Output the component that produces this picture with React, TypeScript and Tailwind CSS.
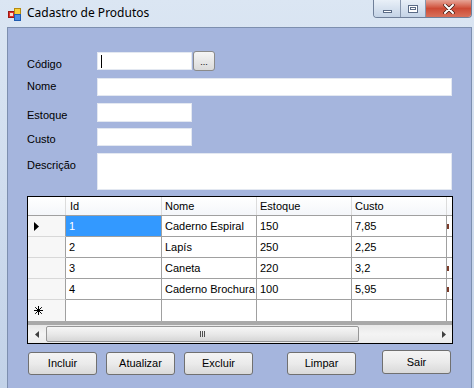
import React from 'react';

const rows = [
  { id: '1', nome: 'Caderno Espiral', estoque: '150', custo: '7,85' },
  { id: '2', nome: 'Lapís', estoque: '250', custo: '2,25' },
  { id: '3', nome: 'Caneta', estoque: '220', custo: '3,2' },
  { id: '4', nome: 'Caderno Brochura', estoque: '100', custo: '5,95' },
];

const cols = 'grid grid-cols-[38px_96px_95px_95px_95px_1fr]';

function AppIcon() {
  return (
    <svg width="13" height="13" viewBox="0 0 13 13">
      <rect x="0.5" y="3.5" width="6" height="6" fill="#e0302a" stroke="#9a1a14" />
      <rect x="2" y="5" width="3" height="3" fill="#fbe0d0" />
      <rect x="6.5" y="0.5" width="6" height="6" fill="#f7cf3a" stroke="#b58a10" />
      <rect x="6.5" y="6.5" width="6" height="6" fill="#4d8ee6" stroke="#1f5bb0" />
    </svg>
  );
}

function WinButtons() {
  return (
    <div className="flex h-[18px] mr-[2px] rounded-b-[4px] border border-t-0 border-[#6f7f99] overflow-hidden">
      <div className="w-[27px] flex items-center justify-center bg-gradient-to-b from-[#e9f0f8] to-[#c4d3e6] border-r border-[#8796ad]">
        <div className="w-[9px] h-[3px] mt-[5px] bg-white border border-[#5a6b86]" />
      </div>
      <div className="w-[25px] flex items-center justify-center bg-gradient-to-b from-[#e9f0f8] to-[#c4d3e6] border-r border-[#8796ad]">
        <div className="w-[10px] h-[8px] bg-white border border-[#5a6b86] flex items-center justify-center">
          <div className="w-[6px] h-[3px] border border-[#5a6b86]" />
        </div>
      </div>
      <div className="w-[45px] flex items-center justify-center bg-gradient-to-b from-[#e6a497] via-[#cd4a35] to-[#d8705a]">
        <svg width="12" height="10" viewBox="0 0 12 10">
          <path d="M2 1 L10 9 M10 1 L2 9" stroke="#3b1a14" strokeWidth="3.4" strokeLinecap="round" />
          <path d="M2 1 L10 9 M10 1 L2 9" stroke="#ffffff" strokeWidth="2" strokeLinecap="round" />
        </svg>
      </div>
    </div>
  );
}

function Field({ w, h = 'h-[18px]', children }: { w: string; h?: string; children?: React.ReactNode }) {
  return <div className={`${w} ${h} bg-white border border-[#e3e8f1] flex items-center`}>{children}</div>;
}

function Btn({ label, className }: { label: string; className: string }) {
  return (
    <div
      className={`w-[69px] h-[23px] flex items-center justify-center rounded-[3px] border border-[#707070] bg-gradient-to-b from-[#f4f4f4] via-[#ebebeb] to-[#d9d9d9] text-[11px] text-black ${className}`}
    >
      {label}
    </div>
  );
}

function Cell({ children, className = '' }: { children?: React.ReactNode; className?: string }) {
  return (
    <div className={`h-[21px] border-r border-b border-[#a0a0a0] flex items-center pl-[3px] bg-white ${className}`}>
      {children}
    </div>
  );
}

export default function App() {
  return (
    <div
      className="w-[474px] h-[388px] overflow-hidden flex flex-col bg-gradient-to-b from-[#dbe6f3] via-[#cfdcee] to-[#c2d2e8] text-black"
      style={{ fontFamily: '"Liberation Sans", Arial, sans-serif' }}
    >
      {/* Title bar */}
      <div className="h-[27px] flex items-start shrink-0">
        <div className="pl-[8px] pt-[8px]">
          <AppIcon />
        </div>
        <div className="ml-[6px] mt-[4px] text-[12px] text-black" style={{ fontFamily: '"Noto Sans", sans-serif' }}>
          Cadastro de Produtos
        </div>
        <div className="flex-1" />
        <WinButtons />
      </div>

      {/* Client area */}
      <div className="flex-1 ml-[7px] mr-[2px] border-l border-t border-r border-[#7d8faf] bg-[#a5b5dd] pl-[19px] pt-[24px] text-[11px] leading-[13px]">
        <div className="flex items-start">
          <div className="w-[70px] pt-[6px]">Código</div>
          <Field w="w-[95px]">
            <div className="ml-[3px] w-px h-[13px] bg-black" />
          </Field>
          <div className="ml-[1px] -mt-[1px] -mb-[1px] w-[22px] h-[20px] rounded-[3px] border border-[#8a8a8a] bg-gradient-to-b from-[#f5f5f5] to-[#dadada] flex items-center justify-center text-[9px] leading-none pt-[3px]">
            ...
          </div>
        </div>
        <div className="flex items-start mt-[7px]">
          <div className="w-[70px] pt-[2px]">Nome</div>
          <Field w="w-[355px]" />
        </div>
        <div className="flex items-start mt-[7px]">
          <div className="w-[70px] pt-[6px]">Estoque</div>
          <Field w="w-[95px]" h="h-[19px]" />
        </div>
        <div className="flex items-start mt-[6px]">
          <div className="w-[70px] pt-[5px]">Custo</div>
          <Field w="w-[95px]" />
        </div>
        <div className="flex items-start mt-[7px]">
          <div className="w-[70px] pt-[6px]">Descrição</div>
          <Field w="w-[355px]" h="h-[37px]" />
        </div>

        {/* Data grid */}
        <div className="mt-[6px] w-[426px] border border-black bg-[#ababab] flex flex-col">
          <div className={`${cols} h-[19px] bg-gradient-to-b from-white to-[#f4f6fa] border-b border-[#a0a0a0]`}>
            <div className="border-r border-[#dcdcdc]" />
            <div className="border-r border-[#dcdcdc] pl-[4px] flex items-center">Id</div>
            <div className="border-r border-[#dcdcdc] pl-[3px] flex items-center">Nome</div>
            <div className="border-r border-[#dcdcdc] pl-[3px] flex items-center">Estoque</div>
            <div className="border-r border-[#dcdcdc] pl-[3px] flex items-center">Custo</div>
            <div />
          </div>
          {rows.map((r, i) => (
            <div key={r.id} className={cols}>
              <div className="h-[21px] border-r border-[#a0a0a0] border-b border-b-[#d8d8d8] bg-[#f7f7f7] flex items-center pl-[6px]">
                {i === 0 && (
                  <svg width="5" height="9" viewBox="0 0 5 9">
                    <path d="M0 0 L5 4.5 L0 9 Z" fill="#000" />
                  </svg>
                )}
              </div>
              <Cell className={i === 0 ? '!bg-[#3399ff] text-white' : ''}>{r.id}</Cell>
              <Cell>{r.nome}</Cell>
              <Cell>{r.estoque}</Cell>
              <Cell>{r.custo}</Cell>
              <div className="h-[21px] border-b border-[#a0a0a0] bg-white flex items-center">
                {i !== 1 && <div className="w-[2px] h-[5px] bg-[#7a3b2a]" />}
              </div>
            </div>
          ))}
          <div className={cols}>
            <div className="h-[21px] border-r border-[#a0a0a0] bg-[#f7f7f7] flex items-center pl-[6px]">
              <svg width="9" height="9" viewBox="0 0 9 9">
                <path d="M4.5 0 V9 M0 4.5 H9 M1.2 1.2 L7.8 7.8 M7.8 1.2 L1.2 7.8" stroke="#000" strokeWidth="1" />
              </svg>
            </div>
            <Cell className="border-b-0" />
            <Cell className="border-b-0" />
            <Cell className="border-b-0" />
            <Cell className="border-b-0" />
            <div className="h-[21px] bg-white" />
          </div>
          <div className="h-[4px] bg-[#a9a9a9]" />
          {/* Horizontal scrollbar */}
          <div className="h-[18px] bg-gradient-to-b from-[#e8e8e8] via-[#f4f4f4] to-[#ececec] flex items-center">
            <div className="w-[18px] flex items-center justify-center">
              <svg width="4" height="7" viewBox="0 0 4 7">
                <path d="M4 0 L0 3.5 L4 7 Z" fill="#404040" />
              </svg>
            </div>
            <div className="w-[313px] h-[16px] rounded-[2px] border border-[#979797] bg-gradient-to-b from-[#f6f6f6] via-[#e9e9e9] to-[#d6d6d6] flex items-center justify-center">
              <div className="flex gap-[1px]">
                <div className="w-px h-[6px] bg-[#505050]" />
                <div className="w-px h-[6px] bg-[#505050]" />
                <div className="w-px h-[6px] bg-[#505050]" />
              </div>
            </div>
            <div className="flex-1" />
            <div className="w-[16px] flex items-center justify-center">
              <svg width="4" height="7" viewBox="0 0 4 7">
                <path d="M0 0 L4 3.5 L0 7 Z" fill="#404040" />
              </svg>
            </div>
          </div>
        </div>

        {/* Buttons */}
        <div className="flex items-start mt-[8px]">
          <Btn label="Incluir" className="ml-[1px]" />
          <Btn label="Atualizar" className="ml-[9px]" />
          <Btn label="Excluir" className="ml-[9px]" />
          <Btn label="Limpar" className="ml-[34px]" />
          <Btn label="Sair" className="ml-[26px] -mt-[2px] !h-[24px]" />
        </div>
      </div>
    </div>
  );
}
